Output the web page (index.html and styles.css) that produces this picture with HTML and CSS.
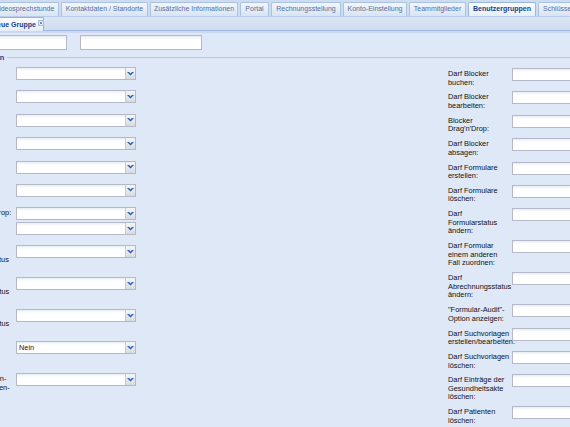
FILE: index.html
```html
<!DOCTYPE html>
<html lang="de">
<head>
<meta charset="utf-8">
<title>Benutzergruppen</title>
<link rel="stylesheet" href="styles.css">
</head>
<body>
<div class="tabbar">
  <div class="tabs">
    <div class="tab tab-w1">Videosprechstunde</div>
    <div class="tab tab-w2">Kontaktdaten / Standorte</div>
    <div class="tab tab-w3">Zusätzliche Informationen</div>
    <div class="tab tab-w4">Portal</div>
    <div class="tab tab-w5">Rechnungsstellung</div>
    <div class="tab tab-w6">Konto-Einstellung</div>
    <div class="tab tab-w7">Teammitglieder</div>
    <div class="tab tab-w8 tab-active">Benutzergruppen</div>
    <div class="tab tab-w9">Schlüssel</div>
  </div>
</div>
<div class="subbar">
  <div class="subtab">
    <span class="subtab-text">Neue Gruppe</span>
    <svg class="close" width="6" height="6" viewBox="0 0 6 6"><rect x="0.5" y="0.5" width="5" height="5" fill="#eef2f8" stroke="#a9bedf"/><path d="M1.8 1.8 L4.2 4.2 M4.2 1.8 L1.8 4.2" stroke="#5f7fb3" stroke-width="0.9"/></svg>
  </div>
</div>
<div class="subfoot"></div>
<div class="panel">
  <div class="toprow">
    <div class="tf tf1"></div>
    <div class="tf tf2"></div>
  </div>
  <div class="legend"><span class="legend-text">Berechtigungen</span><span class="legend-line"></span></div>
  <div class="cols">
    <div class="col">
      <div class="row"><div class="lbl">Darf Termine<br>buchen:</div><div class="combo"><div class="combo-input"></div><div class="trigger"><svg width="7" height="4" viewBox="0 0 7 4"><polygon points="0,0 2,0 3.5,1.5 5,0 7,0 3.5,3.6" fill="#2e5da8"/></svg></div></div></div>
      <div class="row"><div class="lbl">Darf Termine<br>bearbeiten:</div><div class="combo"><div class="combo-input"></div><div class="trigger"><svg width="7" height="4" viewBox="0 0 7 4"><polygon points="0,0 2,0 3.5,1.5 5,0 7,0 3.5,3.6" fill="#2e5da8"/></svg></div></div></div>
      <div class="row"><div class="lbl">Darf Termine<br>verschieben:</div><div class="combo"><div class="combo-input"></div><div class="trigger"><svg width="7" height="4" viewBox="0 0 7 4"><polygon points="0,0 2,0 3.5,1.5 5,0 7,0 3.5,3.6" fill="#2e5da8"/></svg></div></div></div>
      <div class="row"><div class="lbl">Darf Termine<br>absagen:</div><div class="combo"><div class="combo-input"></div><div class="trigger"><svg width="7" height="4" viewBox="0 0 7 4"><polygon points="0,0 2,0 3.5,1.5 5,0 7,0 3.5,3.6" fill="#2e5da8"/></svg></div></div></div>
      <div class="row"><div class="lbl">Darf Serien<br>anlegen:</div><div class="combo"><div class="combo-input"></div><div class="trigger"><svg width="7" height="4" viewBox="0 0 7 4"><polygon points="0,0 2,0 3.5,1.5 5,0 7,0 3.5,3.6" fill="#2e5da8"/></svg></div></div></div>
      <div class="row"><div class="lbl">Darf Serien<br>löschen:</div><div class="combo"><div class="combo-input"></div><div class="trigger"><svg width="7" height="4" viewBox="0 0 7 4"><polygon points="0,0 2,0 3.5,1.5 5,0 7,0 3.5,3.6" fill="#2e5da8"/></svg></div></div></div>
      <div class="row">
        <div class="lbl nowrap">Termin Drag'n'Drop:</div>
        <div class="stack">
          <div class="combo"><div class="combo-input"></div><div class="trigger"><svg width="7" height="4" viewBox="0 0 7 4"><polygon points="0,0 2,0 3.5,1.5 5,0 7,0 3.5,3.6" fill="#2e5da8"/></svg></div></div>
          <div class="combo"><div class="combo-input"></div><div class="trigger"><svg width="7" height="4" viewBox="0 0 7 4"><polygon points="0,0 2,0 3.5,1.5 5,0 7,0 3.5,3.6" fill="#2e5da8"/></svg></div></div>
        </div>
      </div>
      <div class="row"><div class="lbl">Darf<br>Behandlungsstatus<br>ändern:</div><div class="combo"><div class="combo-input"></div><div class="trigger"><svg width="7" height="4" viewBox="0 0 7 4"><polygon points="0,0 2,0 3.5,1.5 5,0 7,0 3.5,3.6" fill="#2e5da8"/></svg></div></div></div>
      <div class="row"><div class="lbl">Darf<br>Abrechnungsstatus<br>ändern:</div><div class="combo"><div class="combo-input"></div><div class="trigger"><svg width="7" height="4" viewBox="0 0 7 4"><polygon points="0,0 2,0 3.5,1.5 5,0 7,0 3.5,3.6" fill="#2e5da8"/></svg></div></div></div>
      <div class="row"><div class="lbl">Darf<br>Bearbeitungsstatus<br>ändern:</div><div class="combo"><div class="combo-input"></div><div class="trigger"><svg width="7" height="4" viewBox="0 0 7 4"><polygon points="0,0 2,0 3.5,1.5 5,0 7,0 3.5,3.6" fill="#2e5da8"/></svg></div></div></div>
      <div class="row"><div class="lbl">Darf<br>Wartezimmer<br>sehen:</div><div class="combo"><div class="combo-input">Nein</div><div class="trigger"><svg width="7" height="4" viewBox="0 0 7 4"><polygon points="0,0 2,0 3.5,1.5 5,0 7,0 3.5,3.6" fill="#2e5da8"/></svg></div></div></div>
      <div class="row"><div class="lbl nowrap">Darf Dokumenten-<br>Behandlungsakten-<br>freigeben:</div><div class="combo"><div class="combo-input"></div><div class="trigger"><svg width="7" height="4" viewBox="0 0 7 4"><polygon points="0,0 2,0 3.5,1.5 5,0 7,0 3.5,3.6" fill="#2e5da8"/></svg></div></div></div>
    </div>
    <div class="col col-r">
      <div class="row"><div class="lbl">Darf Blocker<br>buchen:</div><div class="field"></div></div>
      <div class="row"><div class="lbl">Darf Blocker<br>bearbeiten:</div><div class="field"></div></div>
      <div class="row"><div class="lbl">Blocker<br>Drag'n'Drop:</div><div class="field"></div></div>
      <div class="row"><div class="lbl">Darf Blocker<br>absagen:</div><div class="field"></div></div>
      <div class="row"><div class="lbl">Darf Formulare<br>erstellen:</div><div class="field"></div></div>
      <div class="row"><div class="lbl">Darf Formulare<br>löschen:</div><div class="field"></div></div>
      <div class="row"><div class="lbl">Darf<br>Formularstatus<br>ändern:</div><div class="field"></div></div>
      <div class="row"><div class="lbl">Darf Formular<br>einem anderen<br>Fall zuordnen:</div><div class="field"></div></div>
      <div class="row"><div class="lbl">Darf<br>Abrechnungsstatus<br>ändern:</div><div class="field"></div></div>
      <div class="row"><div class="lbl">"Formular-Audit"-<br>Option anzeigen:</div><div class="field"></div></div>
      <div class="row"><div class="lbl nowrap">Darf Suchvorlagen<br>erstellen/bearbeiten:</div><div class="field"></div></div>
      <div class="row"><div class="lbl">Darf Suchvorlagen<br>löschen:</div><div class="field"></div></div>
      <div class="row"><div class="lbl">Darf Einträge der<br>Gesundheitsakte<br>löschen:</div><div class="field"></div></div>
      <div class="row"><div class="lbl">Darf Patienten<br>löschen:</div><div class="field"></div></div>
    </div>
  </div>
</div>
</body>
</html>
```

FILE: styles.css
```css
* { box-sizing: border-box; }

html, body {
  margin: 0;
  padding: 0;
  width: 570px;
  height: 427px;
  overflow: hidden;
  background: #dfe8f6;
  font-family: "Liberation Sans", Arial, sans-serif;
}

/* ---------- top tab strip ---------- */
.tabbar {
  height: 17px;
  padding-top: 2px;
  background: #cedcf0;
  border-bottom: 1px solid #b9cde9;
  overflow: hidden;
}

.tabs {
  display: flex;
  margin-left: -10px;
}

.tab {
  flex: none;
  height: 14px;
  margin-right: 2px;
  border: 1px solid #a9c1e3;
  border-bottom: none;
  border-radius: 2px 2px 0 0;
  background: linear-gradient(#f2f6fc, #d8e4f4);
  color: #55709c;
  font-size: 7px;
  line-height: 12px;
  text-align: center;
  white-space: nowrap;
  overflow: hidden;
}

.tab-active {
  background: linear-gradient(#fdfeff, #e6eef9);
  color: #15428b;
  font-weight: bold;
  border-color: #99b6e0;
}

.tab-w1 { width: 69px; }
.tab-w2 { width: 87px; }
.tab-w3 { width: 88px; }
.tab-w4 { width: 29px; }
.tab-w5 { width: 70px; }
.tab-w6 { width: 64px; }
.tab-w7 { width: 57px; }
.tab-w8 { width: 68px; }
.tab-w9 { width: 40px; }

/* ---------- sub tab strip ---------- */
.subbar {
  height: 14px;
  background: linear-gradient(#dbe6f5, #cfdcef);
  border-bottom: 1px solid #9fbae2;
  display: flex;
}

.subtab {
  flex: none;
  width: 58px;
  height: 14px;
  margin-left: -14px;
  padding-left: 5px;
  display: flex;
  align-items: center;
  gap: 2px;
  border: 1px solid #8fb1df;
  border-bottom: none;
  border-radius: 2px 2px 0 0;
  background: linear-gradient(#fbfdff, #e4ecf8);
}

.subtab-text {
  font-size: 7px;
  font-weight: bold;
  color: #15428b;
  white-space: nowrap;
}

.close {
  flex: none;
  margin-top: -3px;
}

.subfoot {
  height: 2px;
  background: #cad9ef;
}

/* ---------- panel ---------- */
.panel {
  background: #dfe8f6;
}

.toprow {
  display: flex;
  gap: 13px;
  margin-left: -50px;
  padding-top: 2px;
}

.tf {
  flex: none;
  height: 15px;
  border: 1px solid #b5b8c8;
  background: linear-gradient(#e9edf3, #ffffff 4px);
}

.tf1 { width: 117px; }
.tf2 { width: 122px; }

.legend {
  display: flex;
  align-items: center;
  height: 10px;
  margin-top: 2px;
  margin-left: -52px;
}

.legend-text {
  font-size: 7.4px;
  font-weight: bold;
  color: #15428b;
  white-space: nowrap;
}

.legend-line {
  flex: 1;
  margin-left: 3px;
  border-top: 1px solid #b5c8e3;
}

.cols {
  display: grid;
  grid-template-columns: 502px 214px;
  margin-left: -54px;
  margin-top: 5px;
}

.col-r {
  padding-top: 1px;
}

.row {
  display: flex;
  align-items: flex-start;
  margin-bottom: 4.2px;
}

.lbl {
  flex: none;
  width: 66px;
  margin-right: 4px;
  padding-top: 2px;
  font-size: 7.4px;
  line-height: 8.6px;
  color: #111111;
}

.col-r .lbl {
  width: 64px;
  margin-right: 0;
}

.nowrap { white-space: nowrap; }

.stack {
  display: flex;
  flex-direction: column;
  gap: 2px;
  padding-bottom: 6px;
}

.combo {
  flex: none;
  width: 120px;
  height: 13px;
  display: flex;
  border: 1px solid #b5b8c8;
  background: #ffffff;
}

.combo-input {
  flex: 1;
  padding-left: 2px;
  background: linear-gradient(#e9edf3, #ffffff 3px);
  font-size: 7.4px;
  line-height: 11px;
  color: #222222;
}

.trigger {
  flex: none;
  width: 10px;
  display: flex;
  align-items: center;
  justify-content: center;
  border-left: 1px solid #c6cad2;
  background: linear-gradient(#f4f5f7, #d7dbe1);
}

.field {
  flex: none;
  width: 150px;
  height: 13px;
  border: 1px solid #b5b8c8;
  background: linear-gradient(#e9edf3, #ffffff 3px);
}
```
